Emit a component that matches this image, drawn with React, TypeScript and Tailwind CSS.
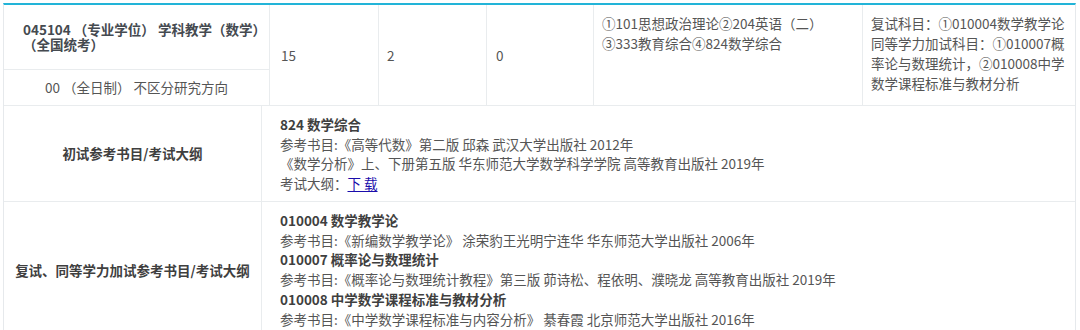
const FONT = "font-['Noto_Sans_CJK_SC','Noto_Sans',sans-serif]";

function Book({ title, lines }: { title: string; lines: React.ReactNode[] }) {
  return (
    <>
      <div className="font-bold text-[#3f3f3f]">{title}</div>
      {lines.map((l, i) => (
        <div key={i}>{l}</div>
      ))}
    </>
  );
}

export default function App() {
  return (
    <div className={`h-[330px] w-[1080px] overflow-hidden bg-white ${FONT} text-[13.5px] text-[#555]`}>
      <div className="ml-[3px] mr-[4px] mt-[3px] border-t-2 border-[#22b4d8] border-x border-x-[#e6e9ec]">
        {/* row 1: programme */}
        <div className="grid grid-cols-[266px_109px_108px_107px_269px_1fr] border-b border-[#e9ecee]">
          <div className="flex flex-col border-r border-[#e9ecee]">
            <div className="flex h-[65px] items-center border-b border-[#e9ecee] pl-[19px] pr-1 font-bold leading-[15px] text-[#454a50]">
              045104 （专业学位） 学科教学（数学）（全国统考）
            </div>
            <div className="flex h-[35px] items-center justify-center">00 （全日制） 不区分研究方向</div>
          </div>
          <div className="flex items-center border-r border-[#e9ecee] pl-[11px]">15</div>
          <div className="flex items-center border-r border-[#e9ecee] pl-[8px]">2</div>
          <div className="flex items-center border-r border-[#e9ecee] pl-[9px]">0</div>
          <div className="border-r border-[#e9ecee] pl-[8px] pt-[8px] leading-[20px]">
            ①101思想政治理论②204英语（二）
            <br />
            ③333教育综合④824数学综合
          </div>
          <div className="pl-[8px] pt-[8px] leading-[20px]">
            复试科目：①010004数学教学论同等学力加试科目：①010007概率论与数理统计，②010008中学数学课程标准与教材分析
          </div>
        </div>

        {/* row 2 */}
        <div className="grid grid-cols-[258px_1fr] border-b border-[#e9ecee]">
          <div className="flex items-center justify-center border-r border-[#e9ecee] font-bold text-[#3f3f3f]">
            初试参考书目/考试大纲
          </div>
          <div className="pb-[7px] pl-[18px] pt-[9px] leading-[19.7px]">
            <Book
              title="824 数学综合"
              lines={[
                "参考书目:《高等代数》第二版 邱森 武汉大学出版社 2012年",
                "《数学分析》上、下册第五版 华东师范大学数学科学学院 高等教育出版社 2019年",
                <>
                  考试大纲：<span className="text-[#1a0dab] underline underline-offset-2">下 载</span>
                </>,
              ]}
            />
          </div>
        </div>

        {/* row 3 */}
        <div className="grid grid-cols-[258px_1fr]">
          <div className="flex items-center justify-center border-r border-[#e9ecee] font-bold text-[#3f3f3f]">
            复试、同等学力加试参考书目/考试大纲
          </div>
          <div className="pb-[8px] pl-[18px] pt-[9px] leading-[19.8px]">
            <Book title="010004 数学教学论" lines={["参考书目:《新编数学教学论》 涂荣豹王光明宁连华 华东师范大学出版社 2006年"]} />
            <Book
              title="010007 概率论与数理统计"
              lines={["参考书目:《概率论与数理统计教程》第三版 茆诗松、程依明、濮晓龙 高等教育出版社 2019年"]}
            />
            <Book
              title="010008 中学数学课程标准与教材分析"
              lines={["参考书目:《中学数学课程标准与内容分析》 綦春霞 北京师范大学出版社 2016年"]}
            />
          </div>
        </div>
      </div>
    </div>
  );
}
